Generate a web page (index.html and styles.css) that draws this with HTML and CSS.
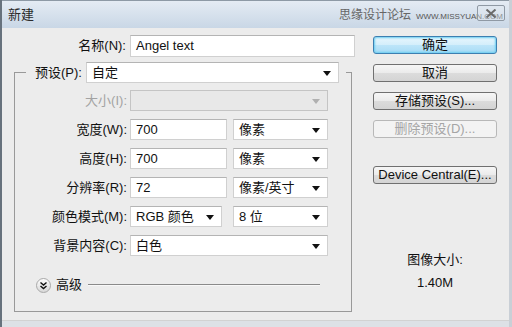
FILE: index.html
```html
<!DOCTYPE html>
<html lang="zh-CN">
<head>
  <meta charset="UTF-8">
  <title>新建</title>
  <link rel="stylesheet" href="styles.css">
</head>
<body>
  <div class="window">
    <div class="titlebar">
      <span class="title">新建</span>
      <span class="watermark"><span class="wm-cn">思缘设计论坛</span><span class="wm-url">WWW.MISSYUAN.COM</span></span>
      <span class="close">
        <svg width="12" height="9" viewBox="0 0 12 9"><path d="M1.5 0.5 L10.5 8.5 M10.5 0.5 L1.5 8.5" stroke="#6c6c6c" stroke-width="2"/></svg>
      </span>
    </div>
    <div class="content">
      <div class="main">
        <div class="name-row">
          <label>名称(N):</label>
          <div class="field input name">Angel text</div>
        </div>
        <fieldset class="group">
          <legend>
            <label>预设(P):</label>
            <div class="field select preset">自定</div>
          </legend>
          <div class="row">
            <label class="off">大小(I):</label>
            <div class="field select disabled full"></div>
          </div>
          <div class="row">
            <label>宽度(W):</label>
            <div class="field input num">700</div>
            <div class="field select unit">像素</div>
          </div>
          <div class="row">
            <label>高度(H):</label>
            <div class="field input num">700</div>
            <div class="field select unit">像素</div>
          </div>
          <div class="row">
            <label>分辨率(R):</label>
            <div class="field input num">72</div>
            <div class="field select unit">像素/英寸</div>
          </div>
          <div class="row">
            <label>颜色模式(M):</label>
            <div class="field select mode">RGB 颜色</div>
            <div class="field select unit">8 位</div>
          </div>
          <div class="row">
            <label>背景内容(C):</label>
            <div class="field select full">白色</div>
          </div>
          <div class="advanced">
            <span class="expander">
              <svg width="15" height="15" viewBox="0 0 15 15"><path d="M4.5 4.5 L7.5 7 L10.5 4.5 M4.5 8 L7.5 10.5 L10.5 8" fill="none" stroke="#111" stroke-width="1.4"/></svg>
            </span>
            <span class="adv-label">高级</span>
            <span class="rule"></span>
          </div>
        </fieldset>
      </div>
      <div class="side">
        <button class="btn primary">确定</button>
        <button class="btn">取消</button>
        <button class="btn">存储预设(S)...</button>
        <button class="btn" disabled>删除预设(D)...</button>
        <button class="btn central">Device Central(E)...</button>
        <div class="info">
          <div>图像大小:</div>
          <div class="size-val">1.40M</div>
        </div>
      </div>
    </div>
    <div class="bottom"></div>
  </div>
</body>
</html>
```

FILE: styles.css
```css
html, body { margin: 0; padding: 0; }
body {
  font-family: "Liberation Sans", "Noto Sans CJK SC", sans-serif;
  font-size: 13px;
  color: #111;
  background: #ececec;
}
.window {
  width: 512px;
  height: 327px;
  box-sizing: border-box;
  border-left: 2px solid #67727d;
  border-right: 3px solid #c9cfd6;
  display: flex;
  flex-direction: column;
  background: #ececec;
  overflow: hidden;
}
.titlebar {
  position: relative;
  height: 28px;
  flex: none;
  display: flex;
  align-items: center;
  border-top: 1px solid #8d99a5;
  box-sizing: border-box;
  background: linear-gradient(#e4ebf3, #c9d7e6);
}
.title {
  margin-left: 6px;
  color: #2a2a2a;
  line-height: 16px;
}
.watermark {
  margin-left: auto;
  margin-right: 6px;
  display: flex;
  align-items: center;
  color: #666;
}
.wm-cn { font-size: 12px; margin-right: 5px; line-height: 16px; }
.wm-url { font-size: 8px; color: #555; margin-top: 3px; }
.close {
  position: absolute;
  right: 4px;
  top: 4px;
  width: 26px;
  height: 14px;
  border: 1px solid #8f99a4;
  border-radius: 2px;
  background: rgba(225, 232, 240, 0.4);
  display: flex;
  align-items: center;
  justify-content: center;
}
.content {
  flex: 1;
  display: flex;
  border-bottom: 1px solid #d2d2d2;
}
.main { width: 358px; }
label { line-height: 16px; white-space: nowrap; }
.name-row {
  display: flex;
  align-items: center;
  margin-top: 7px;
}
.name-row label { width: 124px; text-align: right; }
.field {
  height: 21px;
  box-sizing: border-box;
  background: #fff;
  border: 1px solid #d0d0d0;
  border-top-color: #b4b4b4;
  padding-left: 5px;
  line-height: 19px;
  white-space: nowrap;
}
.name { margin-left: 4px; width: 225px; height: 22px; }
.select { position: relative; }
.select::after {
  content: "";
  position: absolute;
  right: 7px;
  top: 8px;
  border-left: 4px solid transparent;
  border-right: 4px solid transparent;
  border-top: 5px solid #111;
}
.select.disabled { background: #e8e8e8; border-color: #c4c4c4; }
.select.disabled::after { border-top-color: #b0b0b0; }
.group {
  margin: 5px 0 0 12px;
  width: 338px;
  box-sizing: border-box;
  padding: 7px 0 18px 0;
  border: 1px solid #999;
}
.group legend {
  margin-left: 11px;
  padding: 0 7px 0 9px;
  display: flex;
  align-items: center;
}
.preset { margin-left: 4px; width: 253px; }
.row {
  display: flex;
  align-items: center;
  margin-bottom: 8px;
}
.row label { width: 112px; text-align: right; }
.row .field:first-of-type { margin-left: 3px; }
.off { color: #a3a3a3; }
.full { width: 198px; }
.num { width: 97px; }
.mode { width: 92px; }
.unit { width: 95px; margin-left: auto; margin-right: 23px; }
.advanced {
  display: flex;
  align-items: center;
  margin-top: 21px;
  height: 16px;
}
.expander {
  margin-left: 21px;
  width: 15px;
  height: 15px;
  box-sizing: border-box;
  border: 1px solid #a9a9a9;
  border-radius: 50%;
  background: linear-gradient(#fdfdfd, #d8d8d8);
  display: flex;
  align-items: center;
  justify-content: center;
}
.expander svg { margin: -1px; }
.adv-label { margin-left: 5px; line-height: 16px; }
.rule {
  margin-left: 6px;
  width: 232px;
  height: 1px;
  background: #8a8a8a;
  border-bottom: 1px solid #f8f8f8;
}
.side {
  margin-left: 13px;
  width: 124px;
  padding-top: 8px;
  display: flex;
  flex-direction: column;
}
.btn {
  font-family: inherit;
  font-size: 13px;
  height: 18px;
  padding: 0;
  margin: 0 0 10px 0;
  line-height: 14px;
  color: #111;
  border: 1px solid #707070;
  border-radius: 3px;
  background: linear-gradient(#f6f6f6 0%, #ebebeb 50%, #dcdcdc 51%, #d4d4d4 100%);
}
.btn.primary {
  border-color: #3c7fb1;
  background: linear-gradient(#e8f6fd 0%, #d3eefb 50%, #bde5f9 51%, #a8dcf6 100%);
  box-shadow: 0 0 2px 1px #6ccdf0 inset;
}
.btn:disabled {
  color: #a5a5a5;
  border-color: #b8b8b8;
  background: #f3f3f3;
}
.central { margin-top: 18px; }
.info {
  margin-top: 58px;
  text-align: center;
  line-height: 16px;
}
.size-val { margin-top: 7px; }
.bottom {
  height: 6px;
  flex: none;
  background: #dde1e6;
}
```
